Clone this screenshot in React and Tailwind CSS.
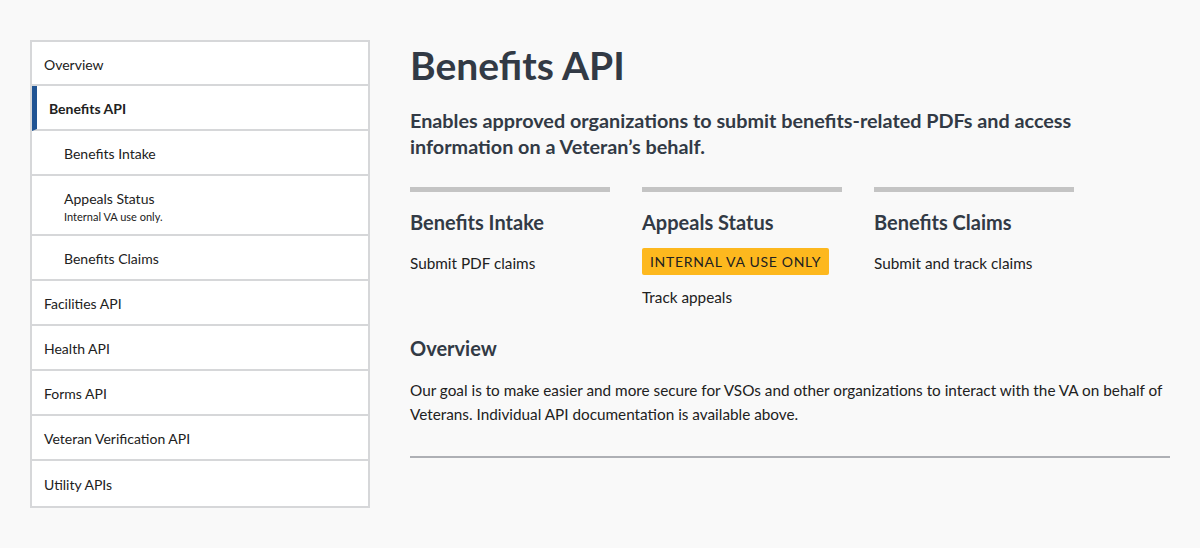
const navItems = [
  { label: 'Overview' },
  { label: 'Benefits API', active: true },
  { label: 'Benefits Intake', sub: true },
  { label: 'Appeals Status', sub: true, note: 'Internal VA use only.' },
  { label: 'Benefits Claims', sub: true },
  { label: 'Facilities API' },
  { label: 'Health API' },
  { label: 'Forms API' },
  { label: 'Veteran Verification API' },
  { label: 'Utility APIs' },
];

const cards = [
  { title: 'Benefits Intake', desc: 'Submit PDF claims' },
  { title: 'Appeals Status', desc: 'Track appeals', internal: true },
  { title: 'Benefits Claims', desc: 'Submit and track claims' },
];

const SideNav = () => (
  <nav className="w-[340px] shrink-0 self-start border-2 border-[#d6d7d9] bg-white">
    <ul className="divide-y-2 divide-[#d6d7d9]">
      {navItems.map((item) => (
        <li
          key={item.label}
          className={`flex flex-col justify-center pt-[3px] text-[14px] text-[#212121] ${
            item.note ? 'h-[60px]' : 'h-[45px] first:h-[44px]'
          } ${item.sub ? 'pl-8' : 'pl-3'} ${
            item.active ? 'border-l-[5px] border-l-[#205493] font-bold' : ''
          }`}
        >
          <span className="leading-5">{item.label}</span>
          {item.note && <span className="text-[11px] leading-4">{item.note}</span>}
        </li>
      ))}
    </ul>
  </nav>
);

const ApiCard = ({ title, desc, internal }) => (
  <div className="w-[200px]">
    <div className="h-[5px] bg-[#c4c4c4]"></div>
    <h3 className="mt-[17px] text-[20px] font-bold leading-[26px] text-[#323a45]">{title}</h3>
    {internal ? (
      <>
        <div className="mt-[13px] inline-block whitespace-nowrap rounded-[2px] bg-[#fdb81e] px-2 text-[14px] leading-[27px] tracking-[0.05em] text-[#212121]">
          INTERNAL VA USE ONLY
        </div>
        <p className="mt-[10px] text-[15.3px] leading-6 text-[#212121]">{desc}</p>
      </>
    ) : (
      <p className="mt-4 text-[15.3px] leading-6 text-[#212121]">{desc}</p>
    )}
  </div>
);

export default function App() {
  return (
    <div
      className="min-h-[548px] bg-[#f9f9f9] px-[30px] pt-10"
      style={{ fontFamily: 'Lato, "Noto Sans", sans-serif' }}
    >
      <div className="flex gap-10">
        <SideNav />

        <main className="w-[760px]">
          <h1 className="pt-px text-[39px] font-bold leading-[48px] text-[#323a45]">Benefits API</h1>
          <p className="mt-[18px] text-[19.8px] font-bold leading-[26px] text-[#323a45]">
            Enables approved organizations to submit benefits-related PDFs and access information on a Veteran’s behalf.
          </p>

          <div className="mt-7 flex gap-8">
            {cards.map((c) => (
              <ApiCard key={c.title} {...c} />
            ))}
          </div>

          <h2 className="mt-[26px] text-[20px] font-bold leading-[26px] text-[#323a45]">Overview</h2>
          <p className="mt-[17px] text-[15.3px] leading-6 text-[#212121]">
            Our goal is to make easier and more secure for VSOs and other organizations to interact with the VA on behalf of Veterans. Individual API documentation is available above.
          </p>
          <hr className="mt-[30px] border-t-2 border-[#aeb0b5]" />
        </main>
      </div>
    </div>
  );
}
